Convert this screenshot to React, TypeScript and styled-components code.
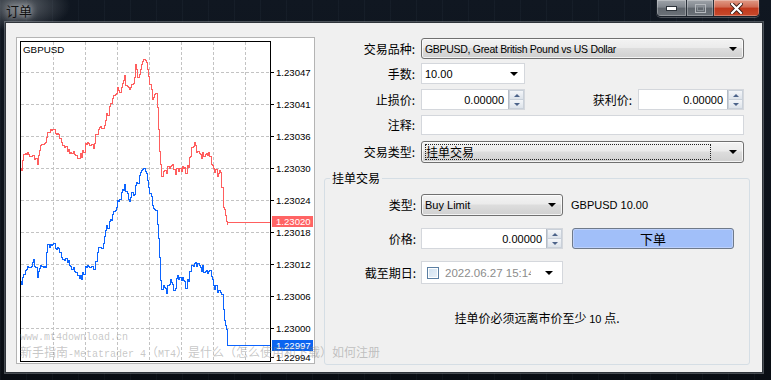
import styled, { createGlobalStyle } from "styled-components";

const GlobalStyle = createGlobalStyle`
  html, body {
    margin: 0;
    padding: 0;
    background: #0b1017;
    overflow: hidden;
  }
  #root {
    width: 771px;
    height: 380px;
  }
`;

const CJK = `"Noto Sans CJK SC", sans-serif`;
const UI = `"Liberation Sans", "Noto Sans CJK SC", sans-serif`;

const Window = styled.div`
  position: relative;
  width: 771px;
  height: 380px;
  display: flex;
  flex-direction: column;
  background:
    radial-gradient(ellipse 70px 34px at 18px 6px, rgba(150, 155, 160, 0.6), transparent 75%),
    repeating-linear-gradient(90deg, rgba(120, 140, 160, 0.06) 0 1px, transparent 1px 26px),
    linear-gradient(180deg, #101721, #090d13);
  font-family: ${UI};
`;

const TitleBar = styled.div`
  height: 22px;
  display: flex;
  justify-content: space-between;
  align-items: flex-start;
`;

const Title = styled.div`
  padding: 3px 0 0 6px;
  font: 13px/16px ${CJK};
  color: #111;
  text-shadow: 0 0 6px rgba(230, 230, 230, 0.9), 0 0 10px rgba(200, 200, 200, 0.7);
`;

const WinButtons = styled.div`
  display: flex;
  margin-right: 11px;
  height: 16px;
  border: 1px solid #1b222b;
  border-top: 0;
  border-radius: 0 0 5px 5px;
  overflow: hidden;
  box-shadow: 0 1px 0 rgba(255, 255, 255, 0.25);
`;

const WinButton = styled.div<{ $w: number; $close?: boolean }>`
  width: ${(p) => p.$w}px;
  display: flex;
  align-items: center;
  justify-content: center;
  background: ${(p) =>
    p.$close
      ? "linear-gradient(#e09a86 0%, #d06a52 45%, #c0381c 50%, #c84a2c 100%)"
      : "linear-gradient(#9ea3a9 0%, #80868d 45%, #60666d 50%, #6c7279 100%)"};
  box-shadow: inset 0 0 0 1px rgba(255, 255, 255, 0.28);
  & + & {
    border-left: 1px solid #2a3139;
  }
`;

const Client = styled.div`
  box-sizing: border-box;
  margin-left: 5px;
  width: 758px;
  height: 351px;
  display: flex;
  align-items: flex-start;
  padding: 14px 0 0 10px;
  background: #f0f0f0;
  border: 1px solid #30353b;
  box-shadow: 0 0 0 1px rgba(190, 195, 200, 0.35);
`;

const ChartPanel = styled.div`
  box-sizing: border-box;
  width: 299px;
  height: 327px;
  background: #fff;
  border: 1px solid #b4b4b4;
  flex-shrink: 0;
  svg {
    display: block;
  }
`;

const Form = styled.div`
  margin-left: 7px;
  padding-top: 1px;
  width: 428px;
  display: flex;
  flex-direction: column;
`;

const FieldRow = styled.div<{ $h: number; $mt?: number; $label?: number; $gap?: number }>`
  display: grid;
  grid-template-columns: ${(p) => p.$label ?? 93}px 1fr;
  column-gap: ${(p) => p.$gap ?? 6}px;
  height: ${(p) => p.$h}px;
  margin-top: ${(p) => p.$mt ?? 0}px;
  padding-right: ${(p) => (p.$label ? 0 : 6)}px;
`;

const Label = styled.div`
  align-self: center;
  text-align: right;
  font: 12px/16px ${CJK};
  color: #000;
  white-space: nowrap;
`;

const Controls = styled.div`
  display: flex;
  align-items: center;
  height: 100%;
`;

const Combo = styled.div<{ $w?: number; $edit?: boolean }>`
  box-sizing: border-box;
  width: ${(p) => (p.$w ? `${p.$w}px` : "100%")};
  height: 100%;
  display: flex;
  align-items: center;
  padding: 0 6px 0 3px;
  border: 1px solid ${(p) => (p.$edit ? "#d4d7dc" : "#707070")};
  border-radius: ${(p) => (p.$edit ? 0 : 3)}px;
  background: ${(p) =>
    p.$edit ? "#fff" : "linear-gradient(#f3f3f3 0%, #ebebeb 45%, #dddddd 50%, #d0d0d0 100%)"};
  box-shadow: ${(p) => (p.$edit ? "none" : "inset 0 0 0 1px rgba(255,255,255,0.75)")};
`;

const ComboText = styled.span<{ $size?: number; $tight?: boolean }>`
  flex: 1;
  font-size: ${(p) => p.$size ?? 11}px;
  letter-spacing: ${(p) => (p.$tight ? "-0.3px" : "0")};
  line-height: 14px;
  color: #000;
  white-space: nowrap;
  overflow: hidden;
`;

const FocusBox = styled.span`
  flex: 1;
  align-self: stretch;
  margin: 2px 12px 2px 0;
  display: flex;
  align-items: center;
  border: 1px dotted #222;
  font: 12px/14px ${CJK};
  color: #000;
`;

const Arrow = styled.span`
  flex-shrink: 0;
  width: 0;
  height: 0;
  border-left: 4px solid transparent;
  border-right: 4px solid transparent;
  border-top: 4px solid #000;
  margin-left: 6px;
`;

const SpinBox = styled.div<{ $w: number }>`
  box-sizing: border-box;
  width: ${(p) => p.$w}px;
  height: 100%;
  display: flex;
  border: 1px solid #d4d7dc;
  background: #fff;
`;

const SpinValue = styled.div`
  flex: 1;
  display: flex;
  align-items: center;
  justify-content: flex-end;
  padding-right: 4px;
  font-size: 11px;
  color: #000;
`;

const SpinButtons = styled.div`
  width: 15px;
  display: flex;
  flex-direction: column;
  border-left: 1px solid #b5bcc6;
`;

const SpinHalf = styled.div<{ $down?: boolean }>`
  flex: 1;
  display: flex;
  align-items: center;
  justify-content: center;
  background: linear-gradient(#f4f6f9, #dde3ea);
  border: 1px solid #c9d0d9;
  & + & {
    border-top: 0;
  }
  &::after {
    content: "";
    width: 0;
    height: 0;
    border-left: 3px solid transparent;
    border-right: 3px solid transparent;
    ${(p) => (p.$down ? "border-top: 3px solid #4c6389;" : "border-bottom: 3px solid #4c6389;")}
  }
`;

const Spacer = styled.div`
  flex: 1;
  text-align: right;
  padding-right: 6px;
  font: 12px/16px ${CJK};
`;

const Group = styled.fieldset`
  margin: 8px 0 0 2px;
  padding: 8px 0 0;
  height: 185px;
  border: 1px solid #d5dee5;
  border-radius: 3px;
  display: flex;
  flex-direction: column;
`;

const Legend = styled.legend`
  margin-left: 5px;
  padding: 0 2px;
  font: 12px/16px ${CJK};
  color: #000;
`;

const SideText = styled.span`
  margin-left: 8px;
  font-size: 11px;
  color: #000;
  white-space: nowrap;
`;

const OrderButton = styled.div`
  box-sizing: border-box;
  width: 162px;
  height: 21px;
  margin-left: 9px;
  display: flex;
  align-items: center;
  justify-content: center;
  background: #a1bff9;
  border: 1px solid #6f7a8a;
  border-radius: 3px;
  box-shadow: inset 0 0 0 1px #bcd0fb;
  font: 13px/16px ${CJK};
  color: #000;
`;

const CheckMark = styled.span`
  box-sizing: border-box;
  width: 12px;
  height: 12px;
  margin: 0 6px 0 2px;
  flex-shrink: 0;
  border: 1px solid #5b7fa3;
  background: linear-gradient(135deg, #cfe0f0, #eaf2fa);
  box-shadow: inset 0 0 0 1px #fff;
`;

const DateText = styled.span`
  width: 86px;
  font-size: 11.5px;
  line-height: 14px;
  color: #8c8c8c;
  white-space: nowrap;
  overflow: hidden;
`;

const DateArrow = styled(Arrow)`
  margin-left: 14px;
`;

const Notice = styled.div`
  margin-top: 26px;
  text-align: center;
  font: 12px/16px ${CJK};
  color: #000;
  span {
    font-family: "Liberation Sans", sans-serif;
    font-size: 11px;
  }
`;

const Watermark = styled.div`
  position: absolute;
  left: 20px;
  top: 329px;
  color: rgba(130, 130, 130, 0.45);
  pointer-events: none;
  white-space: nowrap;
`;

const WatermarkLine = styled.div<{ $size: number }>`
  font-family: "Liberation Mono", "Noto Sans CJK SC", monospace;
  font-size: ${(p) => p.$size}px;
  line-height: 17px;
  span {
    font-size: 10px;
  }
`;

/* chart geometry, page coordinates shifted into the panel */
const OX = 17;
const OY = 38;

const gridX = [36.5, 68.5, 100.5, 132.5, 164.5, 196.5, 228.5];
const levels: [string, number][] = [
  ["1.23047", 34.5],
  ["1.23041", 66.5],
  ["1.23036", 98.5],
  ["1.23030", 130.5],
  ["1.23024", 162.5],
  ["1.23018", 194.5],
  ["1.23012", 226.5],
  ["1.23006", 258.5],
  ["1.23000", 290.5],
];

const askPoints = [
  [20.7, 166.7], [23.3, 153], [25, 152], [31.7, 155], [36.7, 160], [40, 146.7], [45, 140],
  [48.3, 130], [53, 130], [58, 135], [61.7, 143], [66.7, 151.7], [71.7, 153], [77.3, 158],
  [81.7, 151.7], [85, 143], [90, 143], [93.3, 146.7], [96.7, 133], [100, 126.7], [103.3, 126.7],
  [105, 116.7], [110, 103], [115, 93], [120, 90], [123.3, 76.7], [126.7, 88.3], [131.7, 88.3],
  [135, 66.7], [138.3, 76.7], [141.7, 60], [145.7, 61.7], [148.3, 76.7], [151.7, 96.7], [155, 93],
  [156.7, 110], [159.3, 156.7], [161.7, 176.7], [165, 171.7], [171.7, 163.3], [175, 170],
  [181.7, 166.7], [185, 170], [188.3, 161.7], [193.3, 141.7], [196.7, 151.7], [201.7, 156.7],
  [208.3, 153.3], [211.7, 166.7], [215, 173.3], [218.3, 171.7], [220, 168], [222.7, 206.7],
  [226.7, 220], [227.7, 225], [228.5, 221.7],
];

const bidPoints = [
  [20.7, 280], [25, 268], [30, 265], [33, 260], [36.7, 273], [40, 266.7], [45, 265], [46.7, 245],
  [53.3, 245], [58.3, 250], [61.7, 258], [68.3, 263], [73.3, 271.7], [80, 276.7], [85, 266.7],
  [90, 265], [95, 270], [96.7, 250], [101.7, 246.7], [105, 226.7], [110, 220], [115, 208.3],
  [118.3, 201.7], [121.7, 188.3], [125, 188], [128.3, 201.7], [133.3, 193], [136.7, 181.7],
  [141.7, 167.3], [145.7, 173.3], [148.3, 186.7], [151.7, 203.3], [155, 210], [158.3, 243.3],
  [160, 278.3], [161.7, 290], [166.7, 290], [170, 278.3], [173.3, 288.3], [176.7, 276.7],
  [181.7, 276.7], [185, 285], [190, 270], [193.3, 263.3], [198.3, 265], [203.3, 271.7],
  [210, 271.7], [213.3, 288.3], [220, 290], [221.7, 296.7], [224, 323.3], [226.7, 326.7],
  [227.7, 345],
];

const rng = (seed: number) => {
  let s = seed;
  return () => {
    s = (s * 16807) % 2147483647;
    return s / 2147483647;
  };
};

const tickPath = (pts: number[][], endX: number) => {
  const next = rng(4242);
  const p = pts.map(([x, y]) => [x - OX, y - OY]);
  const last = p[p.length - 1];
  let d = `M${Math.round(p[0][0]) + 0.5} ${Math.round(p[0][1]) + 0.5}`;
  let seg = 0;
  for (let x = Math.round(p[0][0]); x <= last[0]; x += 1.2) {
    while (seg < p.length - 2 && x > p[seg + 1][0]) seg++;
    const [x0, y0] = p[seg];
    const [x1, y1] = p[seg + 1];
    const t = Math.min(1, Math.max(0, (x - x0) / (x1 - x0 || 1)));
    const base = y0 + (y1 - y0) * t;
    const spike = next() < 0.35 ? (next() - 0.5) * 10 : (next() - 0.5) * 4;
    const y = Math.round(base + spike) + 0.5;
    d += `H${Math.round(x) + 0.5}V${y}`;
  }
  d += `V${Math.round(last[1]) + 0.5}H${endX}`;
  return d;
};

const Chart = () => (
  <svg width={297} height={325} shapeRendering="crispEdges">
    {gridX.map((x) => (
      <line key={x} x1={x} y1={4} x2={x} y2={323} stroke="#c3c3c3" strokeDasharray="3 2" />
    ))}
    {levels.map(([, y]) => (
      <line key={y} x1={4} y1={y} x2={253} y2={y} stroke="#c3c3c3" strokeDasharray="3 2" />
    ))}
    <path d={tickPath(askPoints, 253.5)} fill="none" stroke="#ff5e5e" />
    <path d={tickPath(bidPoints, 253.5)} fill="none" stroke="#0b64ff" />
    <rect x={3.5} y={3.5} width={250} height={320} fill="none" stroke="#000" />
    <text x={6} y={15} fontFamily="Liberation Sans" fontSize={9.8} fill="#000" shapeRendering="auto">
      GBPUSD
    </text>
    {[...levels, ["1.22994", 319] as [string, number]].map(([label, y]) => (
      <g key={label}>
        <line x1={254} y1={y} x2={257} y2={y} stroke="#000" />
        <text
          x={259}
          y={y + 3.5}
          fontFamily="Liberation Sans"
          fontSize={9.6}
          fill="#000"
          shapeRendering="auto"
        >
          {label}
        </text>
      </g>
    ))}
    <rect x={255} y={178} width={41} height={11} fill="#ff6464" />
    <text x={259} y={187} fontFamily="Liberation Sans" fontSize={9.6} fill="#fff">
      1.23020
    </text>
    <rect x={255} y={302} width={41} height={11} fill="#0b64f0" />
    <text x={259} y={311} fontFamily="Liberation Sans" fontSize={9.6} fill="#fff">
      1.22997
    </text>
  </svg>
);

const Spin = ({ w, value }: { w: number; value: string }) => (
  <SpinBox $w={w}>
    <SpinValue>{value}</SpinValue>
    <SpinButtons>
      <SpinHalf />
      <SpinHalf $down />
    </SpinButtons>
  </SpinBox>
);

const App = () => (
  <Window>
    <GlobalStyle />
    <TitleBar>
      <Title>订单</Title>
      <WinButtons>
        <WinButton $w={29}>
          <svg width={11} height={5}>
            <rect x={0.5} y={0.5} width={10} height={4} fill="#fff" stroke="#2d333a" />
          </svg>
        </WinButton>
        <WinButton $w={26}>
          <svg width={11} height={9}>
            <rect x={0.5} y={0.5} width={10} height={8} fill="none" stroke="#b4b8bd" />
            <rect x={2.5} y={2.5} width={6} height={4} fill="none" stroke="#8a9096" />
          </svg>
        </WinButton>
        <WinButton $w={45} $close>
          <svg width={13} height={11}>
            <path
              d="M2 1 L11 10 M11 1 L2 10"
              stroke="#3a1a14"
              strokeWidth={4}
              strokeLinecap="square"
            />
            <path
              d="M2 1 L11 10 M11 1 L2 10"
              stroke="#fff"
              strokeWidth={2.2}
              strokeLinecap="square"
            />
          </svg>
        </WinButton>
      </WinButtons>
    </TitleBar>

    <Client>
      <ChartPanel>
        <Chart />
      </ChartPanel>

      <Form>
        <FieldRow $h={21}>
          <Label>交易品种:</Label>
          <Combo>
            <ComboText $size={10.5} $tight>
              GBPUSD, Great British Pound vs US Dollar
            </ComboText>
            <Arrow />
          </Combo>
        </FieldRow>

        <FieldRow $h={21} $mt={4}>
          <Label>手数:</Label>
          <Controls>
            <Combo $w={104} $edit>
              <ComboText>10.00</ComboText>
              <Arrow />
            </Combo>
          </Controls>
        </FieldRow>

        <FieldRow $h={21} $mt={5}>
          <Label>止损价:</Label>
          <Controls>
            <Spin w={104} value="0.00000" />
            <Spacer>获利价:</Spacer>
            <Spin w={106} value="0.00000" />
          </Controls>
        </FieldRow>

        <FieldRow $h={20} $mt={5}>
          <Label>注释:</Label>
          <Combo $edit />
        </FieldRow>

        <FieldRow $h={21} $mt={6}>
          <Label>交易类型:</Label>
          <Combo>
            <FocusBox>挂单交易</FocusBox>
            <Arrow />
          </Combo>
        </FieldRow>

        <Group>
          <Legend>挂单交易</Legend>

          <FieldRow $h={22} $label={91} $gap={5}>
            <Label>类型:</Label>
            <Controls>
              <Combo $w={142}>
                <ComboText>Buy Limit</ComboText>
                <Arrow />
              </Combo>
              <SideText>GBPUSD 10.00</SideText>
            </Controls>
          </FieldRow>

          <FieldRow $h={20} $mt={12} $label={91} $gap={5}>
            <Label>价格:</Label>
            <Controls>
              <Spin w={142} value="0.00000" />
              <OrderButton>下单</OrderButton>
            </Controls>
          </FieldRow>

          <FieldRow $h={23} $mt={13} $label={91} $gap={5}>
            <Label>截至期日:</Label>
            <Controls>
              <Combo $w={142} $edit>
                <CheckMark />
                <DateText>2022.06.27 15:14</DateText>
                <DateArrow />
              </Combo>
            </Controls>
          </FieldRow>

          <Notice>
            挂单价必须远离市价至少 <span>10</span> 点.
          </Notice>
        </Group>
      </Form>
    </Client>

    <Watermark>
      <WatermarkLine $size={10}>www.mt4download.cn</WatermarkLine>
      <WatermarkLine $size={12}>
        新手指南<span>-Metatrader 4</span>（<span>MT4</span>）是什么（怎么使用和下载）如何注册
      </WatermarkLine>
    </Watermark>
  </Window>
);

export default App;
